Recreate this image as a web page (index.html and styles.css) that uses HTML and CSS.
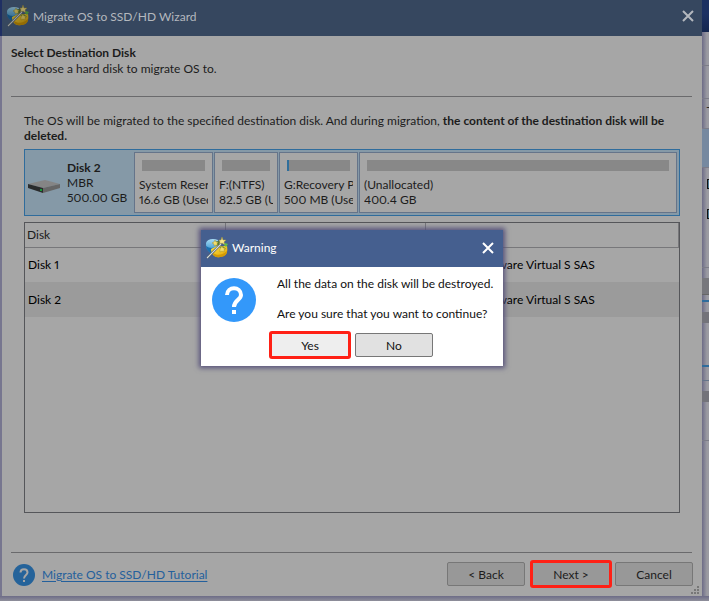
FILE: index.html
```
<!DOCTYPE html>
<html lang="en">
<head>
    <meta charset="UTF-8">
    <title>Migrate OS to SSD/HD Wizard</title>
    <link rel="stylesheet" href="styles.css">
</head>
<body>
    <svg class="sprite" aria-hidden="true">
        <defs>
            <linearGradient id="gold" x1="0" y1="0" x2="1" y2="1">
                <stop offset="0" stop-color="#fbe04a"/>
                <stop offset="1" stop-color="#e3a500"/>
            </linearGradient>
            <linearGradient id="sky" x1="0" y1="0" x2="0" y2="1">
                <stop offset="0" stop-color="#a8dcf5"/>
                <stop offset="1" stop-color="#2186c9"/>
            </linearGradient>
        </defs>
        <symbol id="wizard-icon" viewBox="0 0 22 22">
            <path d="M0 6 C1 2 7 1 12 3 L11 12 L5 16 C1 14 0 11 0 6Z" fill="url(#sky)"/>
            <path d="M0 9 C4 12 8 11 11 9 L5 16 C2 14 0 12 0 9Z" fill="#1b6fae"/>
            <path d="M5 12 L11 9 L21 9 C22 15 21 19 14 20 C9 21 5 18 5 12Z" fill="url(#gold)"/>
            <path d="M7 16 C11 19 17 18 21 14 C21 18 18 20 14 20 C10 21 7 19 7 16Z" fill="#d39a06"/>
            <path d="M9 5 L11 7 L10 9 L13 8 L14 5 L12 4Z" fill="#5b7c2e"/>
            <path d="M13 10 L17 9 L20 12 L17 13Z" fill="#7d9c35"/>
            <path d="M13 3 L15 3 L16 0 L17 3 L20 3 L18 5 L19 8 L16 6 L13 8 L14 5Z" fill="#f8e58a" stroke="#a39535" stroke-width=".5"/>
            <path d="M9 3 L10 5 L12 5 L11 7 L12 9 L10 8 L8 9 L8 7 L6 6 L8 5Z" fill="#f4de6c" stroke="#8d8428" stroke-width=".4"/>
            <path d="M16 9 L17 11 L19 11 L18 13 L18 15 L16 14 L14 15 L14 12Z" fill="#f4de6c" stroke="#8d8428" stroke-width=".4"/>
            <path d="M19 6 L22 7 L20 10 L18 8Z" fill="#62b94c"/>
            <path d="M1 21 L15 7" stroke="#4e5960" stroke-width="2.4"/>
            <path d="M1 21 L15 7" stroke="#d7dddf" stroke-width="1.1"/>
        </symbol>
        <symbol id="help-icon" viewBox="0 0 44 44">
            <circle cx="22" cy="22" r="22"/>
            <path d="M15 17 C15 8 29 8 29 17 C29 22 22 22 22 29" fill="none" stroke="currentColor" stroke-width="4"/>
            <path d="M20 32h4v4h-4z" fill="currentColor"/>
        </symbol>
        <symbol id="close-icon" viewBox="0 0 12 12">
            <path d="M1 1 L11 11 M11 1 L1 11" fill="none" stroke="currentColor" stroke-width="2"/>
        </symbol>
    </svg>

    <div class="desktop">
        <div class="edge-left"></div>

        <main class="wizard">
            <header class="titlebar">
                <svg class="app-icon"><use href="#wizard-icon"/></svg>
                <h1>Migrate OS to SSD/HD Wizard</h1>
                <button class="close" aria-label="Close"><svg><use href="#close-icon"/></svg></button>
            </header>

            <section class="intro">
                <h2>Select Destination Disk</h2>
                <p>Choose a hard disk to migrate OS to.</p>
            </section>

            <section class="content">
                <p class="notice">The OS will be migrated to the specified destination disk. And during migration, <b>the content of the destination disk will be deleted.</b></p>

                <div class="disk-map">
                    <div class="disk">
                        <svg class="drive" viewBox="0 0 32 13">
                            <path d="M0 4 L17 0 L32 4 L15 8Z" fill="#858585"/>
                            <path d="M0 4 L15 8 V13 L0 8Z" fill="#2a2c2d"/>
                            <path d="M15 8 L32 4 V8 L15 13Z" fill="#666"/>
                            <path d="M12 9h2v2h-2z" fill="#159a35"/>
                        </svg>
                        <div><b>Disk 2</b><br>MBR<br>500.00 GB</div>
                    </div>
                    <div class="partition system">
                        <div class="usage"></div>
                        <div>System Reser</div>
                        <div>16.6 GB (Used</div>
                    </div>
                    <div class="partition ntfs">
                        <div class="usage"></div>
                        <div>F:(NTFS)</div>
                        <div>82.5 GB (U</div>
                    </div>
                    <div class="partition recovery">
                        <div class="usage used"></div>
                        <div>G:Recovery P</div>
                        <div>500 MB (Used</div>
                    </div>
                    <div class="partition free">
                        <div class="usage"></div>
                        <div>(Unallocated)</div>
                        <div>400.4 GB</div>
                    </div>
                </div>

                <div class="disk-list">
                    <table>
                        <thead>
                            <tr><th>Disk</th><th></th><th></th></tr>
                        </thead>
                        <tbody>
                            <tr><td>Disk 1</td><td></td><td>VMware, VMware Virtual S SAS</td></tr>
                            <tr><td>Disk 2</td><td></td><td>VMware, VMware Virtual S SAS</td></tr>
                        </tbody>
                    </table>
                </div>
            </section>

            <footer class="footer">
                <svg class="help"><use href="#help-icon"/></svg>
                <a href="#">Migrate OS to SSD/HD Tutorial</a>
                <div class="actions">
                    <button class="btn">&lt; Back</button>
                    <button class="btn marked">Next &gt;</button>
                    <button class="btn">Cancel</button>
                </div>
            </footer>
            <svg class="grip" viewBox="0 0 8 8"><path d="M6 0h2v2h-2zM3 3h2v2h-2zM6 3h2v2h-2zM0 6h2v2h-2zM3 6h2v2h-2zM6 6h2v2h-2z"/></svg>

            <div class="overlay">
                <div class="dialog" role="dialog" aria-labelledby="dialog-title">
                    <header class="titlebar">
                        <svg class="app-icon"><use href="#wizard-icon"/></svg>
                        <h2 id="dialog-title">Warning</h2>
                        <button class="close" aria-label="Close"><svg><use href="#close-icon"/></svg></button>
                    </header>
                    <div class="message">
                        <svg class="question"><use href="#help-icon"/></svg>
                        <div>
                            <p>All the data on the disk will be destroyed.</p>
                            <p>Are you sure that you want to continue?</p>
                        </div>
                    </div>
                    <div class="dialog-actions">
                        <button class="btn marked">Yes</button>
                        <button class="btn">No</button>
                    </div>
                </div>
            </div>
        </main>

        <div class="edge-right">
            <div class="strip navy"></div>
            <div class="strip toolbar"></div>
            <div class="strip row"></div>
            <div class="strip head">-</div>
            <div class="strip selected"></div>
            <div class="strip boxes"><i></i><i></i></div>
            <div class="strip bar"></div>
            <div class="strip picked"><i></i></div>
            <div class="strip other"><i></i></div>
        </div>
        <div class="edge-bottom"></div>
    </div>
</body>
</html>
```
FILE: styles.css
```
* {
    box-sizing: border-box;
}

body {
    margin: 0;
    font-family: Lato, "Open Sans", sans-serif;
    font-size: 12px;
    font-variant-numeric: proportional-nums;
    line-height: 15px;
    color: #1c1c1c;
    background: #8a8a96;
}

h1, h2, p {
    margin: 0;
    font-size: 12px;
    font-weight: normal;
}

button {
    font: inherit;
    color: inherit;
}

.sprite {
    display: block;
    width: 0;
    height: 0;
}

.desktop {
    display: grid;
    grid-template-columns: 2px 1fr 7px;
    grid-template-rows: 1fr 5px;
    height: 100vh;
    overflow: hidden;
}

/* Wizard window */
.wizard {
    position: relative;
    display: flex;
    flex-direction: column;
    min-width: 0;
    background: #a6a6a6;
}

.titlebar {
    display: flex;
    align-items: center;
    gap: 4px;
    height: 36px;
    padding: 0 8px 4px 5px;
    background: #36475f;
    color: #b4b8be;
}

.app-icon {
    width: 22px;
    height: 22px;
}

.wizard > .titlebar .app-icon {
    filter: brightness(0.7);
}

.close {
    display: flex;
    margin-left: auto;
    padding: 0;
    border: 0;
    background: none;
}

.close svg {
    width: 12px;
    height: 12px;
}

.intro {
    margin: 0 10px 0 9px;
    padding: 9px 0 20px;
    border-bottom: 1px solid #6a6a6c;
}

.intro h2 {
    font-weight: bold;
}

.intro p {
    padding: 1px 0 0 13px;
}

.content {
    flex: 1;
    display: flex;
    flex-direction: column;
    padding: 16px 22px 39px;
}

.notice {
    margin-bottom: 6px;
}

.disk-map {
    display: flex;
    gap: 1px;
    height: 67px;
    margin-bottom: 6px;
    padding: 2px;
    border: 1px solid #2f6c9c;
    background: #8599a7;
}

.disk {
    display: flex;
    align-items: center;
    gap: 7px;
    width: 106px;
    padding-left: 1px;
    white-space: nowrap;
}

.drive {
    width: 32px;
    height: 13px;
    flex: none;
    margin-top: 7px;
}

.partition {
    padding: 7px 4px 0;
    border: 1px solid #65748a;
    background: #a6a6a6;
    white-space: nowrap;
    overflow: hidden;
}

.partition div {
    overflow: hidden;
}

.usage {
    height: 11px;
    margin: 0 3px 6px;
    background: #888;
}

.usage.used {
    border-left: 2px solid #2f6f9c;
}

.system {
    width: 79px;
}

.ntfs {
    width: 64px;
}

.recovery {
    width: 79px;
}

.free {
    flex: 1;
}

.disk-list {
    flex: 1;
    border: 1px solid #55565a;
}

table {
    width: 100%;
    border-collapse: collapse;
    table-layout: fixed;
}

th {
    height: 24px;
    padding: 0 2px;
    border-right: 1px solid #77777a;
    border-bottom: 1px solid #77777a;
    font-weight: normal;
    text-align: left;
}

th:first-child, th:nth-child(2) {
    width: 200px;
}

td {
    height: 35px;
    padding: 0 3px;
    color: #000;
}

tbody tr:nth-child(even) {
    background: #9b9b9b;
}

.footer {
    display: flex;
    align-items: center;
    margin: 0 10px 0 9px;
    padding: 7px 0 8px;
    border-top: 1px solid #6a6a6c;
}

.help {
    width: 22px;
    height: 22px;
    margin: 2px 7px 0 2px;
    fill: #25639a;
    color: #a6a6a6;
}

.footer a {
    color: #24609c;
    text-underline-offset: 2px;
}

.actions {
    display: flex;
    align-items: center;
    gap: 3px;
    margin-left: auto;
    margin-right: -1px;
}

.btn {
    width: 78px;
    height: 24px;
    padding: 0;
    border: 1px solid #777;
    border-radius: 2px;
    background: #989898;
}

.btn.marked {
    width: 82px;
    height: 28px;
    border: 3px solid #ff2015;
    border-radius: 3px;
}

.actions .btn:first-child {
    margin-right: 2px;
}

.grip {
    position: absolute;
    right: 3px;
    bottom: 2px;
    width: 8px;
    height: 8px;
    fill: #777;
}

/* Warning dialog */
.overlay {
    position: absolute;
    inset: 0;
    display: flex;
    align-items: center;
    justify-content: center;
}

.dialog {
    width: 302px;
    background: #fff;
    color: #111;
    box-shadow: 0 0 5px 2px #55507a;
}

.dialog .titlebar {
    height: 37px;
    padding: 0 9px 2px 5px;
    background: #455f8f;
    color: #fff;
}

.message {
    display: flex;
    align-items: flex-start;
    gap: 21px;
    padding: 9px 4px 0 11px;
    white-space: nowrap;
}

.message p {
    margin-bottom: 15px;
}

.question {
    width: 44px;
    height: 44px;
    flex: none;
    margin-top: 2px;
    fill: #3398fa;
    color: #fff;
}

.dialog-actions {
    display: flex;
    align-items: center;
    gap: 4px;
    margin-top: -5px;
    padding: 0 0 7px 68px;
}

.dialog .btn {
    background: #e1e1e1;
    border-color: #777;
}

.dialog .btn.marked {
    background: #eee;
    border-color: #ff2015;
}

/* Slivers of the main window left visible around the wizard */
.edge-left {
    background: linear-gradient(#1f2f63 36px, #77768f 36px);
}

.edge-bottom {
    grid-column: 1 / -1;
    background: linear-gradient(#6d6c87, #8f8f9a);
}

.edge-right {
    overflow: hidden;
    background: linear-gradient(90deg, #6d6c87, #9b9ba2 5px);
}

.strip {
    border-bottom: 1px solid #7c7c88;
}

.navy {
    height: 32px;
    border: 0;
    background: linear-gradient(#1c3162 14px, #14264f);
}

.toolbar {
    height: 34px;
}

.row {
    height: 33px;
}

.head {
    height: 30px;
    padding-left: 4px;
}

.selected {
    height: 39px;
    background: #7689a0;
}

.boxes {
    height: 100px;
    padding: 11px 0 0 5px;
}

.boxes i {
    display: block;
    width: 10px;
    height: 10px;
    margin-bottom: 20px;
    border: 1px solid #111;
    background: #4c7995;
}

.bar {
    height: 27px;
    border-bottom-color: #666;
    background: linear-gradient(transparent 10px, #77777c 10px);
}

.picked, .other {
    padding-top: 10px;
}

.picked {
    height: 67px;
    margin-top: 5px;
    border-top: 2px solid #2f6c9c;
    border-bottom: 2px solid #2f6c9c;
}

.other {
    height: 61px;
    margin-top: 13px;
    border-top: 1px solid #65748a;
}

.picked i, .other i {
    display: block;
    height: 11px;
    background: #73737a;
}
```
